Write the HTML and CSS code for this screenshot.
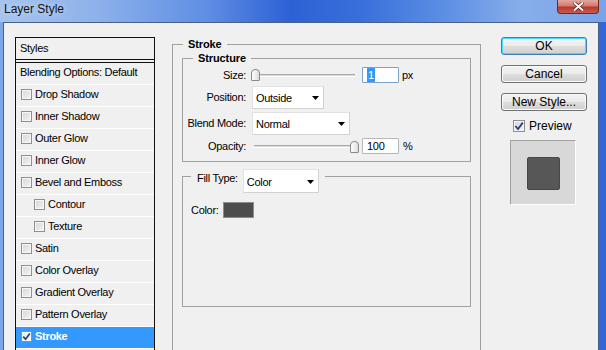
FILE: index.html
```html
<!DOCTYPE html>
<html lang="en">
<head>
  <meta charset="UTF-8">
  <meta name="viewport" content="width=device-width, initial-scale=1.0">
  <title>Layer Style</title>
  <link rel="stylesheet" href="styles.css">
</head>
<body>
  <div class="titlebar">
    <span class="title">Layer Style</span>
    <div class="close-btn">
      <svg width="11" height="9" viewBox="0 0 11 9">
        <path d="M1.5 1 L9.5 8 M9.5 1 L1.5 8" stroke="#5a2019" stroke-width="3.4" stroke-linecap="round"/>
        <path d="M1.5 1 L9.5 8 M9.5 1 L1.5 8" stroke="#fff" stroke-width="2" stroke-linecap="round"/>
      </svg>
    </div>
  </div>

  <div class="client">
    <!-- lista de estilos -->
    <div class="styles-panel">
      <div class="panel-header">Styles</div>
      <ul class="style-list">
        <li class="plain">Blending Options: Default</li>
        <li><span class="check"></span>Drop Shadow</li>
        <li><span class="check"></span>Inner Shadow</li>
        <li><span class="check"></span>Outer Glow</li>
        <li><span class="check"></span>Inner Glow</li>
        <li><span class="check"></span>Bevel and Emboss</li>
        <li class="sub"><span class="check"></span>Contour</li>
        <li class="sub"><span class="check"></span>Texture</li>
        <li><span class="check"></span>Satin</li>
        <li><span class="check"></span>Color Overlay</li>
        <li><span class="check"></span>Gradient Overlay</li>
        <li><span class="check"></span>Pattern Overlay</li>
        <li class="selected">
          <span class="check">
            <svg width="9" height="9" viewBox="0 0 9 9"><path d="M1.2 4.6 L3.6 7.2 L7.8 1.5" fill="none" stroke="#23408a" stroke-width="1.7"/></svg>
          </span>Stroke
        </li>
        <li class="plain"></li>
      </ul>
    </div>

    <!-- opciones del trazo -->
    <fieldset class="group stroke-group">
      <legend>Stroke</legend>

      <fieldset class="group structure">
        <legend>Structure</legend>
        <div class="form-grid">
          <label>Size:</label>
          <div class="control">
            <div class="slider size-slider"><span class="track"></span><span class="thumb"></span></div>
            <div class="num-input focused"><span class="sel">1</span></div>
            <span class="unit">px</span>
          </div>

          <label>Position:</label>
          <div class="control">
            <div class="select position-select">
              <span>Outside</span>
              <svg width="7" height="4" viewBox="0 0 7 4"><polygon points="0,0 7,0 3.5,4" fill="#000"/></svg>
            </div>
          </div>

          <label>Blend Mode:</label>
          <div class="control">
            <div class="select blend-select">
              <span>Normal</span>
              <svg width="7" height="4" viewBox="0 0 7 4"><polygon points="0,0 7,0 3.5,4" fill="#000"/></svg>
            </div>
          </div>

          <label>Opacity:</label>
          <div class="control">
            <div class="slider opacity-slider"><span class="track"></span><span class="thumb"></span></div>
            <div class="num-input">100</div>
            <span class="unit pct">%</span>
          </div>
        </div>
      </fieldset>

      <fieldset class="group fill">
        <legend>
          <span class="legend-row">
            <span class="legend-label">Fill Type:</span>
            <span class="select fill-select">
              <span>Color</span>
              <svg width="7" height="4" viewBox="0 0 7 4"><polygon points="0,0 7,0 3.5,4" fill="#000"/></svg>
            </span>
          </span>
        </legend>
        <div class="fill-body">
          <div class="color-row">
            <span>Color:</span>
            <span class="swatch"></span>
          </div>
        </div>
      </fieldset>
    </fieldset>

    <!-- botones -->
    <div class="actions">
      <div class="btn default">OK</div>
      <div class="btn">Cancel</div>
      <div class="btn">New Style...</div>
      <div class="preview-row">
        <span class="check big">
          <svg width="10" height="10" viewBox="0 0 10 10"><path d="M1.4 5 L4 8 L8.8 1.6" fill="none" stroke="#23408a" stroke-width="1.8"/></svg>
        </span>
        Preview
      </div>
      <div class="preview-box">
        <div class="preview-square"></div>
      </div>
    </div>
  </div>
</body>
</html>
```

FILE: styles.css
```css
* {
  box-sizing: border-box;
}

body {
  margin: 0;
  width: 606px;
  height: 350px;
  overflow: hidden;
  font-family: "Liberation Sans", Arial, sans-serif;
  font-size: 11px;
  letter-spacing: -0.3px;
  color: #000;
  background: linear-gradient(90deg, #7ea5e7 0%, #4a7ade 50%, #3566d6 100%);
}

/* barra de titulo */
.titlebar {
  height: 22px;
  display: flex;
  justify-content: space-between;
  align-items: flex-start;
  padding-left: 4px;
  background: linear-gradient(90deg, #a6c4ee 0%, #8db1ea 16%, #5f8ee3 34%, #2c61d5 48%, #3a70db 60%, #5e90e4 74%, #88aeea 86%, #7aa3e8 100%);
}

.title {
  font-size: 12px;
  letter-spacing: 0;
  line-height: 19px;
  color: #111;
  text-shadow: 0 0 6px rgba(255,255,255,0.7);
}

.close-btn {
  width: 42px;
  height: 14px;
  margin-right: 7px;
  display: flex;
  justify-content: center;
  align-items: center;
  border: 1px solid #6b2a23;
  border-top: none;
  border-radius: 0 0 4px 4px;
  background: linear-gradient(#e4a79f 0%, #d27a71 45%, #b9382c 55%, #cc5a4c 100%);
}

/* area del dialogo */
.client {
  height: 328px;
  margin: 0 7px 0 3px;
  padding: 14px 0 0 11px;
  display: flex;
  align-items: flex-start;
  background-color: #f0f0f0;
  border: 1px solid #4a5f86;
  border-bottom: none;
}

/* panel de estilos */
.styles-panel {
  width: 140px;
  height: 320px;
  border: 1px solid #111;
  flex-shrink: 0;
}

.panel-header {
  height: 25px;
  line-height: 20px;
  padding-left: 4px;
  border-bottom: 4px double #111;
}

.style-list {
  list-style: none;
  margin: 0;
  padding: 0;
}

.style-list li {
  height: 22px;
  display: flex;
  align-items: center;
  padding-left: 5px;
  padding-bottom: 3px;
  border-bottom: 1px solid #fff;
}

.style-list li.plain {
  padding-left: 4px;
}

.style-list li.sub {
  padding-left: 18px;
}

.style-list li.selected {
  background-color: #3399ff;
  color: #fff;
  font-weight: bold;
}

.check {
  width: 11px;
  height: 11px;
  margin-right: 3px;
  display: inline-flex;
  align-items: center;
  justify-content: center;
  border: 1px solid #8f8f8f;
  background: linear-gradient(135deg, #d6d6d6 0%, #f4f4f4 100%);
  box-shadow: inset 0 0 0 1px #f7f7f7;
  flex-shrink: 0;
}

.selected .check {
  background: linear-gradient(135deg, #e8e8e8 0%, #ffffff 100%);
}

.check.big {
  width: 12px;
  height: 12px;
  margin-right: 4px;
}

/* grupos */
.group {
  margin: 0;
  padding: 0;
  min-inline-size: 0;
  border: 1px solid #a0a0a0;
}

.group legend {
  padding: 0 5px;
  line-height: 14px;
  font-weight: bold;
  letter-spacing: -0.1px;
}

.stroke-group {
  width: 309px;
  height: 330px;
  margin-left: 17px;
  padding: 0 9px;
  flex-shrink: 0;
}

.stroke-group > legend {
  margin-left: 1px;
}

.structure > legend {
  margin-left: 10px;
}

.form-grid {
  display: grid;
  grid-template-columns: 63px 1fr;
  grid-template-rows: 16px 23px 23px 16px;
  column-gap: 5px;
  row-gap: 3px;
  align-items: center;
  padding: 2px 0 7px;
}

.form-grid label {
  text-align: right;
  margin-top: -1px;
}

.control {
  display: flex;
  align-items: center;
  height: 100%;
}

.slider {
  position: relative;
  height: 16px;
  display: flex;
  align-items: center;
}

.track {
  width: 100%;
  height: 3px;
  border-top: 1px solid #a8a8a8;
  border-bottom: 1px solid #fff;
  background-color: #dcdcdc;
}

.thumb {
  position: absolute;
  top: 2px;
  width: 9px;
  height: 12px;
  border: 1px solid #8a8a8a;
  border-radius: 4px 4px 1px 1px;
  background: linear-gradient(90deg, #fdfdfd, #dedede);
}

.size-slider {
  width: 104px;
}

.size-slider .thumb {
  left: 0;
}

.opacity-slider {
  width: 103px;
  margin-left: 3px;
}

.opacity-slider .thumb {
  right: -2px;
  top: 3px;
}

.num-input {
  width: 37px;
  height: 16px;
  margin-left: 7px;
  padding-left: 4px;
  line-height: 14px;
  background-color: #fff;
  border: 1px solid #b5b7bd;
  border-radius: 1px;
}

.opacity-slider + .num-input {
  margin-left: 5px;
}

.num-input.focused {
  border-color: #7da2ce;
}

.sel {
  display: inline-block;
  padding: 0 1px;
  background-color: #3399ff;
  color: #fff;
}

.unit {
  margin-left: 3px;
}

.unit.pct {
  margin-left: 4px;
}

.select {
  height: 23px;
  display: flex;
  align-items: center;
  justify-content: space-between;
  padding: 1px 4px 0 3px;
  background-color: #fff;
  border: 1px solid #e2e2e2;
  border-right-color: #d2d2d2;
  border-bottom-color: #d2d2d2;
  font-weight: normal;
}

.position-select {
  width: 72px;
  margin-left: 1px;
}

.blend-select {
  width: 98px;
  margin-left: 1px;
}

/* tipo de relleno */
.fill {
  margin-top: 7px;
}

.fill > legend {
  margin-left: 8px;
  padding: 0 6px;
  height: 14px;
}

.legend-row {
  display: flex;
  align-items: flex-start;
  height: 14px;
  font-weight: normal;
  letter-spacing: -0.3px;
}

.legend-label {
  margin-top: 2px;
}

.fill-select {
  width: 76px;
  height: 24px;
  margin-left: 5px;
  flex-shrink: 0;
}

.fill-body {
  height: 123px;
  padding: 19px 0 0 8px;
}

.color-row {
  display: flex;
  align-items: center;
  height: 16px;
}

.swatch {
  width: 31px;
  height: 16px;
  margin-left: 4px;
  background-color: #4d4d4d;
  border: 1px solid #8c8c8c;
}

/* columna derecha */
.actions {
  width: 86px;
  margin-left: 20px;
  display: flex;
  flex-direction: column;
  flex-shrink: 0;
}

.btn {
  height: 18px;
  margin-bottom: 10px;
  display: flex;
  align-items: center;
  justify-content: center;
  font-size: 12px;
  letter-spacing: 0;
  border: 1px solid #707070;
  border-radius: 3px;
  background: linear-gradient(#f2f2f2 0%, #ebebeb 48%, #dddddd 52%, #cfcfcf 100%);
  box-shadow: inset 0 0 0 1px #fbfbfb;
}

.btn.default {
  border-color: #3c7fb1;
  box-shadow: inset 0 0 0 1px #48d8fb;
  background: linear-gradient(#f4f4f4 0%, #ececec 48%, #dedede 52%, #d0d0d0 100%);
}

.preview-row {
  height: 14px;
  margin-top: -2px;
  margin-left: 12px;
  display: flex;
  align-items: center;
  font-size: 12px;
  letter-spacing: 0;
}

.preview-box {
  width: 66px;
  height: 65px;
  margin: 7px 0 0 9px;
  display: flex;
  align-items: center;
  justify-content: center;
  background-color: #d8d8d8;
  border: 1px solid #fff;
  border-top-color: #a0a0a0;
  border-left-color: #a0a0a0;
}

.preview-square {
  width: 33px;
  height: 33px;
  margin-top: 2px;
  background-color: #575757;
  border: 1px solid #474747;
  border-radius: 2px;
}
```
